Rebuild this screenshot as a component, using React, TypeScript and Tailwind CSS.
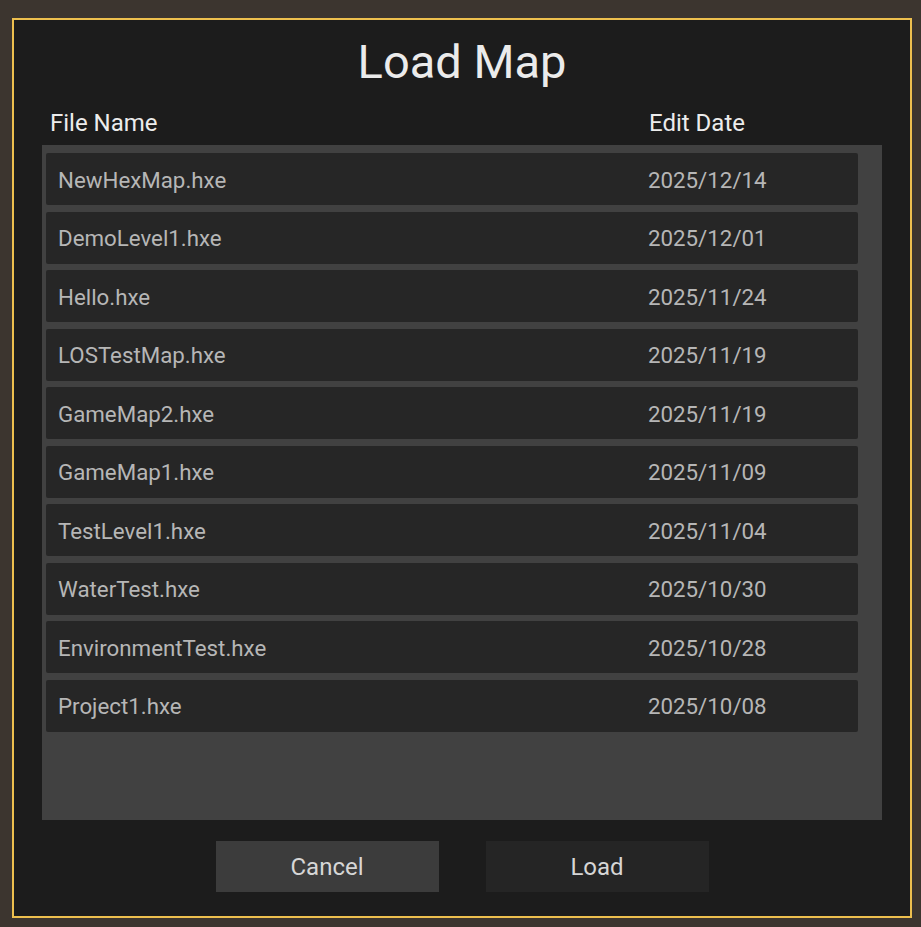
const files = [
    {name: "NewHexMap.hxe", date: "2025/12/14"},
    {name: "DemoLevel1.hxe", date: "2025/12/01"},
    {name: "Hello.hxe", date: "2025/11/24"},
    {name: "LOSTestMap.hxe", date: "2025/11/19"},
    {name: "GameMap2.hxe", date: "2025/11/19"},
    {name: "GameMap1.hxe", date: "2025/11/09"},
    {name: "TestLevel1.hxe", date: "2025/11/04"},
    {name: "WaterTest.hxe", date: "2025/10/30"},
    {name: "EnvironmentTest.hxe", date: "2025/10/28"},
    {name: "Project1.hxe", date: "2025/10/08"},
];

const App = () => {
    return (
        <div className='w-[921px] h-[927px] bg-[#3c352f] pt-[18px] pl-[12px] font-["Roboto",sans-serif]'>
            <div className='w-[900px] h-[900px] border-2 border-[#edbf4e] bg-[#1c1c1c] flex flex-col pt-[18px] px-[28px]'>
                <h1 className='text-[47px] leading-none text-[#ebebeb] text-center h-[47px]'>Load Map</h1>
                <div className='mt-[26px] h-[24px] flex text-[24px] leading-none text-[#ececec]'>
                    <span className='pl-[8px] w-[607px]'>File Name</span>
                    <span>Edit Date</span>
                </div>
                <div className='mt-[10px] h-[675px] bg-[#414141] pt-[8px] pl-[4px] pr-[24px] flex flex-col gap-[6.5px]'>
                    {files.map((f) => (
                        <div key={f.name} className='h-[52px] shrink-0 bg-[#262626] rounded-[2px] flex items-center pt-[2px] text-[22.3px] leading-none text-[#b6b6b6]'>
                            <span className='pl-[12px] w-[602px]'>{f.name}</span>
                            <span>{f.date}</span>
                        </div>
                    ))}
                </div>
                <div className='mt-[21px] flex justify-center gap-[47px]'>
                    <button className='w-[223px] h-[51px] bg-[#3c3c3c] text-[24px] leading-none text-[#d6d6d6]'>Cancel</button>
                    <button className='w-[223px] h-[51px] bg-[#252525] text-[24px] leading-none text-[#d6d6d6]'>Load</button>
                </div>
            </div>
        </div>
    );
};

export default App;
